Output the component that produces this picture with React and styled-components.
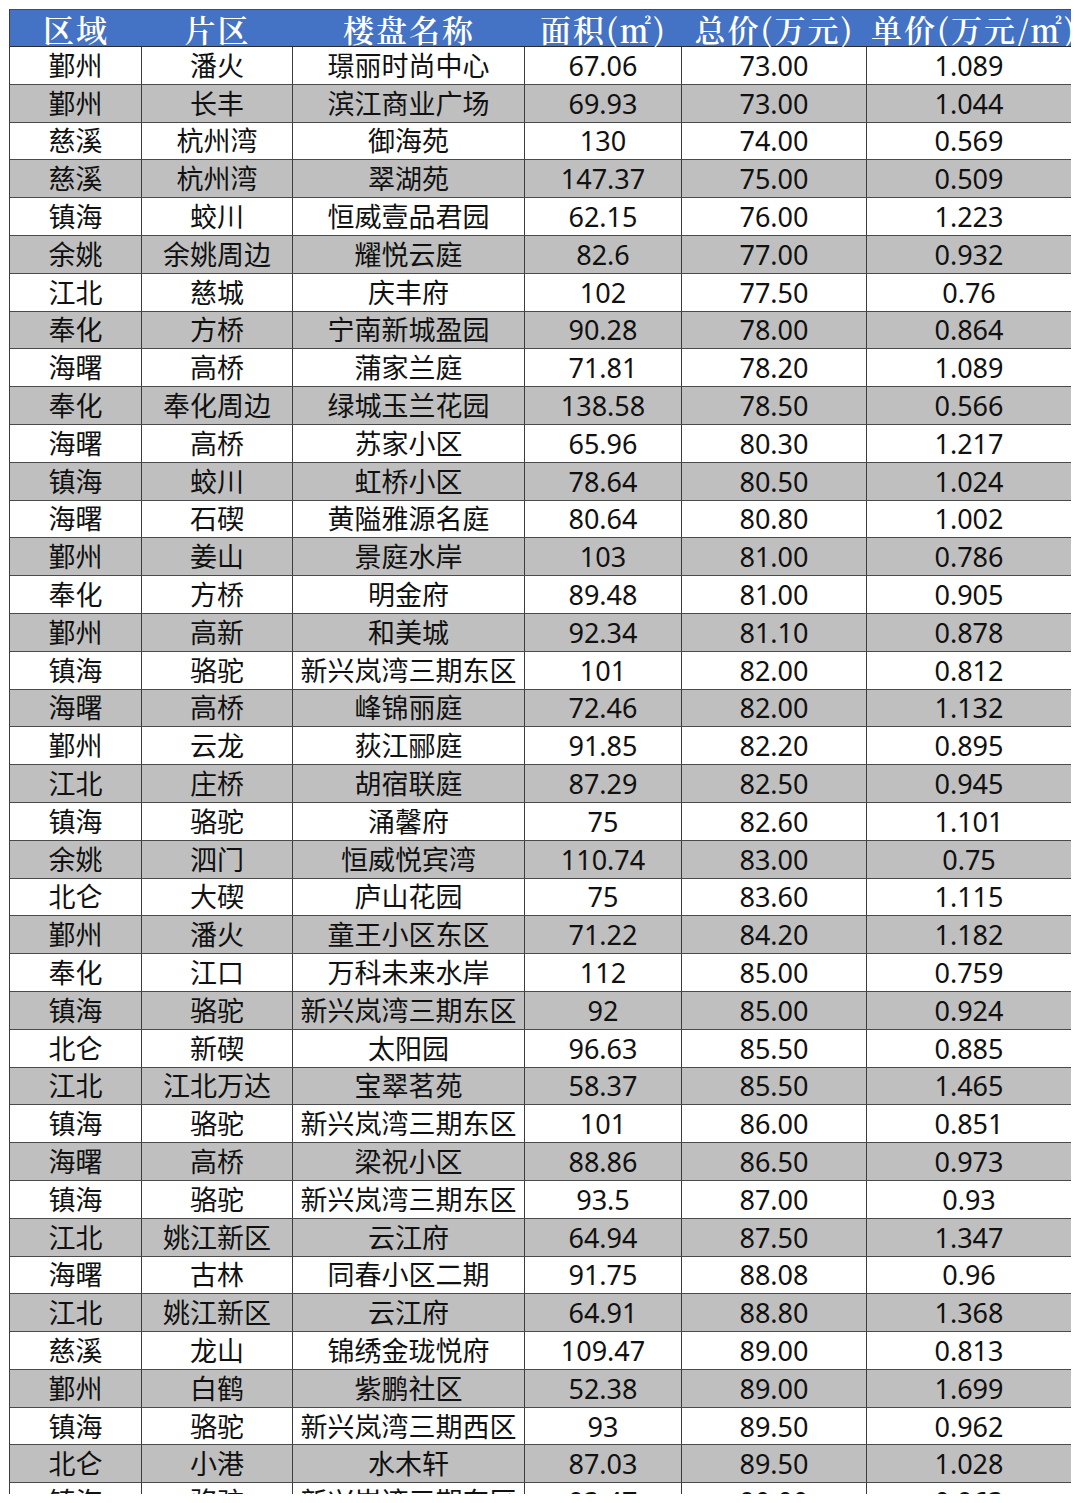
import React from 'react';
import styled, { createGlobalStyle } from 'styled-components';

const COLS = '132px 151px 232px 157px 185px 205px';

const headers = ['区域', '片区', '楼盘名称', '面积(㎡)', '总价(万元)', '单价(万元/㎡)'];

const rows = [
  ['鄞州', '潘火', '璟丽时尚中心', '67.06', '73.00', '1.089'],
  ['鄞州', '长丰', '滨江商业广场', '69.93', '73.00', '1.044'],
  ['慈溪', '杭州湾', '御海苑', '130', '74.00', '0.569'],
  ['慈溪', '杭州湾', '翠湖苑', '147.37', '75.00', '0.509'],
  ['镇海', '蛟川', '恒威壹品君园', '62.15', '76.00', '1.223'],
  ['余姚', '余姚周边', '耀悦云庭', '82.6', '77.00', '0.932'],
  ['江北', '慈城', '庆丰府', '102', '77.50', '0.76'],
  ['奉化', '方桥', '宁南新城盈园', '90.28', '78.00', '0.864'],
  ['海曙', '高桥', '蒲家兰庭', '71.81', '78.20', '1.089'],
  ['奉化', '奉化周边', '绿城玉兰花园', '138.58', '78.50', '0.566'],
  ['海曙', '高桥', '苏家小区', '65.96', '80.30', '1.217'],
  ['镇海', '蛟川', '虹桥小区', '78.64', '80.50', '1.024'],
  ['海曙', '石碶', '黄隘雅源名庭', '80.64', '80.80', '1.002'],
  ['鄞州', '姜山', '景庭水岸', '103', '81.00', '0.786'],
  ['奉化', '方桥', '明金府', '89.48', '81.00', '0.905'],
  ['鄞州', '高新', '和美城', '92.34', '81.10', '0.878'],
  ['镇海', '骆驼', '新兴岚湾三期东区', '101', '82.00', '0.812'],
  ['海曙', '高桥', '峰锦丽庭', '72.46', '82.00', '1.132'],
  ['鄞州', '云龙', '荻江郦庭', '91.85', '82.20', '0.895'],
  ['江北', '庄桥', '胡宿联庭', '87.29', '82.50', '0.945'],
  ['镇海', '骆驼', '涌馨府', '75', '82.60', '1.101'],
  ['余姚', '泗门', '恒威悦宾湾', '110.74', '83.00', '0.75'],
  ['北仑', '大碶', '庐山花园', '75', '83.60', '1.115'],
  ['鄞州', '潘火', '童王小区东区', '71.22', '84.20', '1.182'],
  ['奉化', '江口', '万科未来水岸', '112', '85.00', '0.759'],
  ['镇海', '骆驼', '新兴岚湾三期东区', '92', '85.00', '0.924'],
  ['北仑', '新碶', '太阳园', '96.63', '85.50', '0.885'],
  ['江北', '江北万达', '宝翠茗苑', '58.37', '85.50', '1.465'],
  ['镇海', '骆驼', '新兴岚湾三期东区', '101', '86.00', '0.851'],
  ['海曙', '高桥', '梁祝小区', '88.86', '86.50', '0.973'],
  ['镇海', '骆驼', '新兴岚湾三期东区', '93.5', '87.00', '0.93'],
  ['江北', '姚江新区', '云江府', '64.94', '87.50', '1.347'],
  ['海曙', '古林', '同春小区二期', '91.75', '88.08', '0.96'],
  ['江北', '姚江新区', '云江府', '64.91', '88.80', '1.368'],
  ['慈溪', '龙山', '锦绣金珑悦府', '109.47', '89.00', '0.813'],
  ['鄞州', '白鹤', '紫鹏社区', '52.38', '89.00', '1.699'],
  ['镇海', '骆驼', '新兴岚湾三期西区', '93', '89.50', '0.962'],
  ['北仑', '小港', '水木轩', '87.03', '89.50', '1.028'],
  ['镇海', '骆驼', '新兴岚湾三期东区', '93.47', '90.00', '0.963'],
];

const GlobalStyle = createGlobalStyle`
  html, body {
    margin: 0;
    padding: 0;
    background: #ffffff;
  }
  body {
    font-family: "Noto Sans", "Noto Sans CJK SC", sans-serif;
  }
`;

const Page = styled.div`
  width: 1080px;
  height: 1503px;
  padding: 9px 0 0 9px;
  box-sizing: border-box;
  background: #fff;
`;

// the sheet is cut off mid-row at the bottom, like the screenshot
const Sheet = styled.div`
  width: 1062px;
  height: 1485px;
  overflow: hidden;
  border-left: 1px solid #3c3c3c;
  box-sizing: border-box;
`;

const HeaderRow = styled.div`
  display: grid;
  grid-template-columns: ${COLS};
  height: 38px;
  background: #4472c4;
  border-top: 1px solid #2f4f86;
  border-bottom: 1px solid #2a2a2a;
  box-sizing: border-box;
`;

const HeaderCell = styled.div`
  display: flex;
  align-items: center;
  justify-content: ${(p) => (p.$clip ? 'flex-start' : 'center')};
  padding-left: ${(p) => (p.$clip ? '4px' : '0')};
  overflow: ${(p) => (p.$clip ? 'hidden' : 'visible')};
  white-space: nowrap;
  color: #ffffff;
  font-family: "Noto Serif CJK SC", "Noto Sans CJK SC", serif;
  font-size: 31px;
  font-weight: 600;
  letter-spacing: 2px;
  line-height: 1;
`;

const Row = styled.div`
  display: grid;
  grid-template-columns: ${COLS};
  height: 37.8px;
  background: ${(p) => (p.$shaded ? '#bfbfbf' : '#ffffff')};
  border-bottom: 1px solid #4a4a4a;
  box-sizing: border-box;
`;

const Cell = styled.div`
  display: flex;
  align-items: center;
  justify-content: center;
  white-space: nowrap;
  border-right: 1px solid #3c3c3c;
  color: #111;
  font-size: 27px;
  line-height: 1;
`;

export default function App() {
  return (
    <Page>
      <GlobalStyle />
      <Sheet>
        <HeaderRow>
          {headers.map((h, i) => (
            <HeaderCell key={h} $clip={i === headers.length - 1}>
              {h}
            </HeaderCell>
          ))}
        </HeaderRow>
        {rows.map((r, i) => (
          <Row key={i} $shaded={i % 2 === 1}>
            {r.map((v, j) => (
              <Cell key={j}>{v}</Cell>
            ))}
          </Row>
        ))}
      </Sheet>
    </Page>
  );
}
